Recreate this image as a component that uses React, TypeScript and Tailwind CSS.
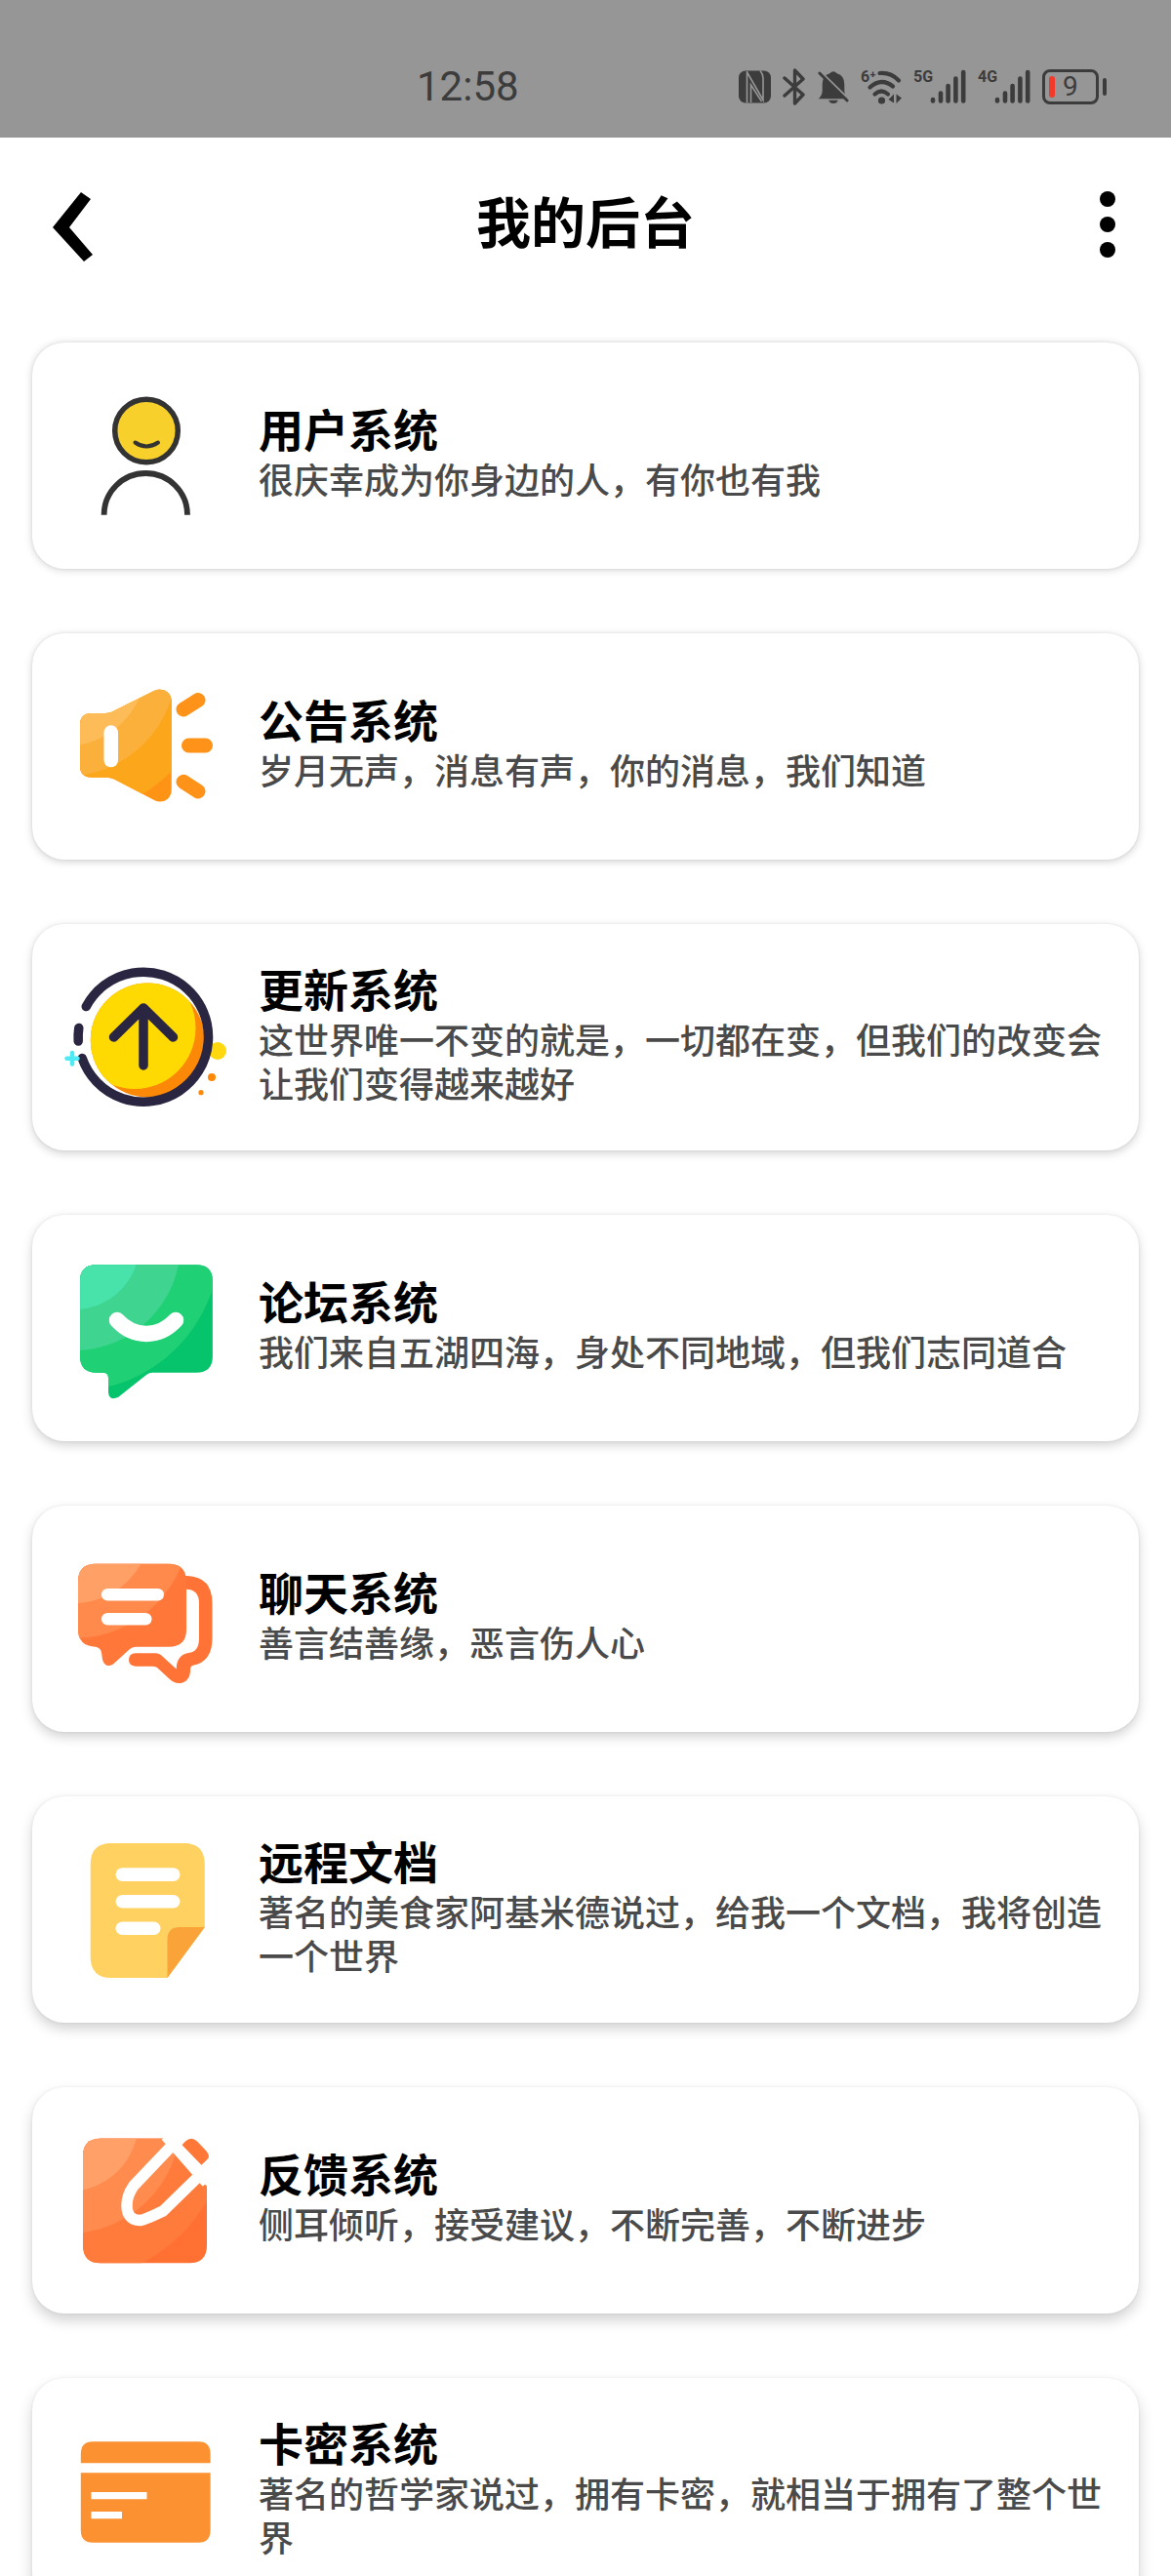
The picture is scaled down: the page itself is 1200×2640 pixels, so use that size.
import React from 'react';

const UserIcon = () => (
  <svg viewBox="0 0 168 168" className="size-[168px] shrink-0" fill="none" stroke="#333" aria-hidden="true">
    <circle cx="84" cy="58.5" r="32.3" fill="#f7d02c" strokeWidth="5.5" />
    <path d="M72.500 70.500Q84 78.500 96 70.500" strokeWidth="4" strokeLinecap="round" />
    <path d="M40.600 144.700A42.700 42.700 0 0 1 126 144.700" strokeWidth="5.8" />
  </svg>
);

const NoticeIcon = () => (
  <svg viewBox="0 0 168 168" className="size-[168px] shrink-0" aria-hidden="true">
    <clipPath id="horn">
      <path d="M28 50H42C46 50 49 49 52 47L91 27.500C100 23 109.800 28 109.800 38V128C109.800 138 101 143.500 92 139L51 117.500Q47 115.700 43 115.700H28Q16 115.700 16 104V62Q16 50 28 50Z" />
    </clipPath>
    <g clipPath="url(#horn)">
      <rect width="168" height="168" fill="#ff9315" />
      <circle r="155" fill="#fca61b" />
      <circle r="115" fill="#fbb03c" />
      <circle r="84" fill="#fdbc58" />
    </g>
    <rect x="40.500" y="62.300" width="14.500" height="43" rx="7.200" fill="#fff" />
    <path d="M122 46L137 36.500M127.500 83H144.500M122 120.300L137 130" stroke="#ff9218" strokeWidth="15" strokeLinecap="round" />
  </svg>
);

const UpdateIcon = () => (
  <svg viewBox="0 0 168 168" className="size-[168px] shrink-0" fill="none" aria-hidden="true">
    <clipPath id="coin">
      <circle cx="85.300" cy="87" r="58.500" />
    </clipPath>
    <circle cx="157" cy="98" r="9" fill="#ffd810" />
    <g clipPath="url(#coin)">
      <rect width="168" height="168" fill="#fb8806" />
      <circle cx="72" cy="74.500" r="62.500" fill="#ffda02" />
    </g>
    <g stroke="#2a2540" strokeWidth="9.500" strokeLinecap="round" strokeLinejoin="round">
      <path d="M22.300 52.500A66.500 66.500 0 1 1 18.200 105.500" />
      <path d="M14.800 74.500Q13.800 81 14.200 88" />
      <path d="M81 113V54M50.500 84L81 54L111.500 84" />
    </g>
    <circle cx="151" cy="125" r="4" fill="#fb8806" />
    <circle cx="140" cy="140.700" r="2.600" fill="#fb8806" />
    <path d="M2.500 105.700H13.500M8 100V111.500" stroke="#4feaf3" strokeWidth="4.500" strokeLinecap="round" />
  </svg>
);

const ForumIcon = () => (
  <svg viewBox="0 0 168 168" className="size-[168px] shrink-0" aria-hidden="true">
    <clipPath id="forum">
      <path d="M33 19.300H135Q151.900 19.300 151.900 36V113Q151.900 129.700 135 129.700H90Q87 129.700 84 132L55 155Q45 159 45 149V135Q45 129.700 39 129.700H33Q16 129.700 16 113V36Q16 19.300 33 19.300Z" />
    </clipPath>
    <g clipPath="url(#forum)">
      <rect width="168" height="168" fill="#06c46b" />
      <circle cx="8" cy="-2" r="151" fill="#20d075" />
      <circle cx="10" cy="-2" r="109" fill="#3fd48f" />
      <circle cx="10" cy="-2" r="67" fill="#48e3aa" />
    </g>
    <path d="M54 76C71 94.500 97 94.500 114 76" fill="none" stroke="#fff" strokeWidth="16.500" strokeLinecap="round" />
  </svg>
);

const ChatIcon = () => (
  <svg viewBox="0 0 168 168" className="size-[168px] shrink-0" aria-hidden="true">
    <clipPath id="chat">
      <path d="M32 27.700H107Q125 27.700 125 46V95Q125 112.700 107 112.700H74Q70 112.700 67 115L50 130.500Q42 135 39 126L38.200 120Q38 114 32 112.700Q14 112 14 95V46Q14 27.700 32 27.700Z" />
    </clipPath>
    {/* back bubble: solid outline with a pointed notch cut into the tail */}
    <path d="M122 40H126Q151.500 41 151.500 68V104Q151.500 128 132 131.700Q129 132.500 129 136V138Q128.500 147 121 149.500Q114 151.500 108 146L95 134Q93 132.700 90 132.700H73Q66 132 66 126Q66 119.500 73 119.200H93Q98 119.200 101 123L114.700 135.500Q115 121 127 119Q138 118 138 104V68Q138 54 125 53.700H122Z" fill="#ff7436" />
    <g clipPath="url(#chat)">
      <rect width="168" height="168" fill="#ff7839" />
      <circle cx="10" cy="-14" r="118" fill="#ff8a4c" />
      <circle cx="10" cy="-10" r="78" fill="#ffa067" />
    </g>
    <rect x="38" y="53" width="64" height="12.500" rx="6.200" fill="#fff" />
    <rect x="38" y="78" width="51.500" height="12.500" rx="6.200" fill="#fff" />
  </svg>
);

const DocumentIcon = () => (
  <svg viewBox="0 0 168 168" className="size-[168px] shrink-0" aria-hidden="true">
    <path d="M48 16H122.500Q143.800 16 143.800 38V102L105.500 154H48Q26.700 154 26.700 132V38Q26.700 16 48 16Z" fill="#ffd160" />
    <path d="M105.500 154V115Q105.500 102 118.500 102H143.800Z" fill="#faa338" />
    <g fill="#fff">
      <rect x="52.500" y="41.300" width="66" height="13.600" rx="6.800" />
      <rect x="52.500" y="69" width="66" height="13.600" rx="6.800" />
      <rect x="52.500" y="96.400" width="46" height="13.600" rx="6.800" />
    </g>
  </svg>
);

const FeedbackIcon = () => (
  <svg viewBox="0 0 168 168" className="size-[168px] shrink-0" aria-hidden="true">
    <clipPath id="note">
      <path d="M37 20.700H101L146 70V130Q146 148.300 128 148.300H37Q19 148.300 19 130V39Q19 20.700 37 20.700Z" />
    </clipPath>
    <g clipPath="url(#note)">
      <rect width="168" height="168" fill="#ff7032" />
      <circle cx="4" cy="3" r="164" fill="#ff7b3b" />
      <circle cx="4" cy="3" r="115" fill="#ff8b4e" />
      <circle cx="4" cy="3" r="72" fill="#ffa069" />
    </g>
    <path d="M104 18L146 66M110 28L71 69Q64 79 64 89Q64 104 77 104.500Q81 104.500 101 95L139 58" fill="none" stroke="#fff" strokeWidth="11.500" />
    <path d="M120.500 27.300L124 23.500Q130 18 136 23.500L145 33Q150.500 39 145.500 43L140.400 47.800Z" fill="#ff7838" />
  </svg>
);

const CardIcon = () => (
  <svg viewBox="0 0 168 168" className="size-[168px] shrink-0" aria-hidden="true">
    <path d="M29 33.300H137.500Q149.600 33.300 149.600 46V55.300H16.800V46Q16.800 33.300 29 33.300Z" fill="#fb9130" />
    <path d="M16.800 65.300H149.600V124Q149.600 136.700 137.500 136.700H29Q16.800 136.700 16.800 124Z" fill="#fb9130" />
    <path d="M27.500 85H84.500V92.200H27.500ZM27.500 105H59V112.200H27.500Z" fill="#fff" />
  </svg>
);

const systems = [
  { title: '用户系统', desc: '很庆幸成为你身边的人，有你也有我', Icon: UserIcon },
  { title: '公告系统', desc: '岁月无声，消息有声，你的消息，我们知道', Icon: NoticeIcon },
  { title: '更新系统', desc: '这世界唯一不变的就是，一切都在变，但我们的改变会让我们变得越来越好', Icon: UpdateIcon },
  { title: '论坛系统', desc: '我们来自五湖四海，身处不同地域，但我们志同道合', Icon: ForumIcon },
  { title: '聊天系统', desc: '善言结善缘，恶言伤人心', Icon: ChatIcon },
  { title: '远程文档', desc: '著名的美食家阿基米德说过，给我一个文档，我将创造一个世界', Icon: DocumentIcon },
  { title: '反馈系统', desc: '侧耳倾听，接受建议，不断完善，不断进步', Icon: FeedbackIcon },
  { title: '卡密系统', desc: '著名的哲学家说过，拥有卡密，就相当于拥有了整个世界', Icon: CardIcon },
];

const Signal = ({ label }: { label: string }) => (
  <div className="flex items-start">
    <span className="w-[17px] text-base leading-4 font-bold">{label}</span>
    <svg viewBox="0 0 37 36" className="h-9 w-[37px]" fill="none" stroke="currentColor" strokeWidth="4.600" strokeLinecap="round" aria-hidden="true">
      <path d="M3 31V32.500M11 24.500V32.500M18.600 17V32.500M26.400 9.500V32.500M34.200 3V32.500" />
    </svg>
  </div>
);

const StatusBar = () => (
  <div className="flex h-[141px] shrink-0 items-center justify-between bg-[#969696] pt-[37px] pr-[66px] pl-[427px] font-[Roboto,sans-serif] text-[#3c3c3c]">
    <span className="text-[42px] leading-9">12:58</span>
    <div className="flex items-center gap-3">
      <svg viewBox="0 0 33 36" className="h-9 w-[33px]" aria-hidden="true">
        <rect y="1.500" width="33" height="33" rx="7" fill="currentColor" />
        <path d="M8.500 2V34.500M8.500 3L25 31.500V9Q25 5 22 1.500M12.500 34V16L23.500 33" fill="none" stroke="#969696" strokeWidth="1.600" />
      </svg>
      <svg viewBox="0 0 24 38" className="h-[38px] w-6" fill="none" stroke="currentColor" strokeWidth="3.400" strokeLinejoin="round" strokeLinecap="round" aria-hidden="true">
        <path d="M2 10L21 27L12.500 36V2L21 11L2 28" />
      </svg>
      <svg viewBox="0 0 34 36" className="h-9 w-8" aria-hidden="true">
        <path d="M1 31Q5 27 5 22V15Q5 6 13 3.500Q17-1 21 3.500Q29 6 29 15V22Q29 27 33 31Z" fill="currentColor" />
        <path d="M12 32.500H22Q21 36 17 36T12 32.500Z" fill="currentColor" />
        <path d="M1 0L35 33" stroke="#969696" strokeWidth="3" />
        <path d="M2 3L32 33" stroke="currentColor" strokeWidth="3" strokeLinecap="round" />
      </svg>
      <div className="relative h-9 w-[42px]">
        <span className="absolute top-0 left-0 text-base leading-4 font-bold">6⁺</span>
        <svg viewBox="0 0 42 36" className="h-9 w-[42px]" fill="none" stroke="currentColor" aria-hidden="true">
          <path d="M19.500 4Q31 3 39 11.500M9.500 18.500Q21 8 33 17.500M14.500 25.500Q21 19.500 28 25.500" strokeWidth="4.200" strokeLinecap="round" />
          <circle cx="21.500" cy="32" r="3.600" fill="currentColor" stroke="none" />
          <path d="M34 25.500V34.500L28.500 31ZM36.500 35V25.500L42 29.500Z" fill="currentColor" stroke="none" />
        </svg>
      </div>
      <Signal label="5G" />
      <Signal label="4G" />
      <div className="flex items-center gap-1">
        <div className="flex h-9 w-[58px] items-center gap-2 rounded-lg border-3 border-current px-1 text-[28px] leading-7">
          <span className="h-[22px] w-[6px] rounded-full bg-[#f13a2c]" />
          9
        </div>
        <span className="h-[18px] w-1 rounded-full bg-current" />
      </div>
    </div>
  </div>
);

const App = () => {
  return (
    <div className="flex h-screen flex-col overflow-hidden bg-white font-[Roboto,'Noto_Sans_CJK_SC',sans-serif]">
      <StatusBar />
      <header className="flex h-[177px] shrink-0 items-center justify-between px-[45px]">
        <button type="button" aria-label="返回">
          <svg viewBox="0 0 60 80" className="h-20 w-[60px]" aria-hidden="true">
            <path d="M38 7L48 14L26 43L50 71L41 78L9 43Z" />
          </svg>
        </button>
        <h1 className="text-[56px] leading-[80px] font-bold">我的后台</h1>
        <button type="button" aria-label="更多" className="flex w-[60px] flex-col items-end gap-[10px] pr-3">
          <span className="size-4 rounded-full bg-black" />
          <span className="size-4 rounded-full bg-black" />
          <span className="size-4 rounded-full bg-black" />
        </button>
      </header>
      <main className="flex flex-1 flex-col gap-[66px] overflow-y-auto p-[33px] [scrollbar-width:none]">
        {systems.map(({ title, desc, Icon }, i) => (
          <a
            key={title}
            href="#"
            className="flex min-h-[232px] shrink-0 items-center gap-[31px] rounded-[33px] bg-white px-[33px]"
            style={{ boxShadow: `0 ${1 + i}px ${8 + i}px rgba(0,0,0,0.18), 0 0 3px rgba(0,0,0,0.08)` }}
          >
            <Icon />
            <div className="flex-1 pb-1">
              <h2 className="text-[46px] leading-[59px] font-bold text-black">{title}</h2>
              <p className="text-[36px] leading-[45px] font-medium text-[#4a4a4a]">{desc}</p>
            </div>
          </a>
        ))}
      </main>
    </div>
  );
};

export default App;
